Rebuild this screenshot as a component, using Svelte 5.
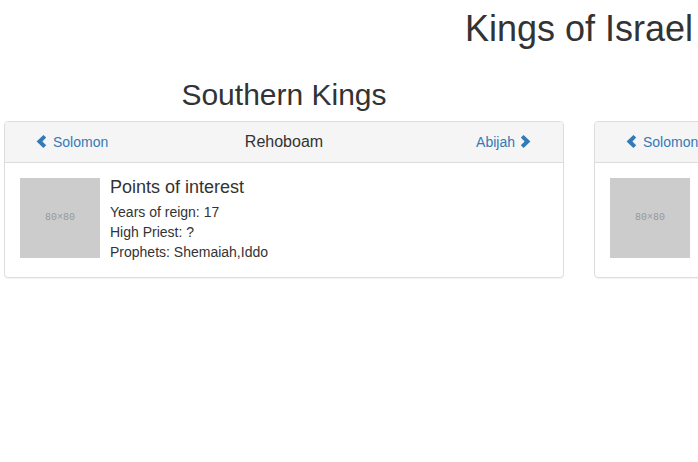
<script>
  const divisions = [
    {
      title: 'Southern Kings',
      previous: 'Solomon',
      king: 'Rehoboam',
      next: 'Abijah',
      reign: '17',
      priest: '?',
      prophets: ['Shemaiah', 'Iddo']
    },
    {
      title: 'Northern Kings',
      previous: 'Solomon',
      king: 'Jeroboam',
      next: 'Nadab',
      reign: '22',
      priest: '?',
      prophets: ['Ahijah']
    }
  ];
</script>

<div class="viewport">
  <main>
    <h1>Kings of Israel</h1>
    <div class="divisions">
      {#each divisions as division}
        <section>
          <h2>{division.title}</h2>
          <article class="panel">
            <header>
              <a href="#previous">
                <svg class="chevron" viewBox="0 0 14 14" aria-hidden="true">
                  <path d="M8.4 0 L11.2 2.6 L7.4 6.4 L11.2 10.2 L8.4 13 L1.6 6.4 Z" />
                </svg>
                <span>{division.previous}</span>
              </a>
              <h3>{division.king}</h3>
              <a class="next" href="#next">
                <span>{division.next}</span>
                <svg class="chevron" viewBox="0 0 14 14" aria-hidden="true">
                  <path d="M4.6 0 L1.8 2.6 L5.6 6.4 L1.8 10.2 L4.6 13 L11.4 6.4 Z" />
                </svg>
              </a>
            </header>
            <div class="body">
              <div class="thumbnail">80×80</div>
              <div class="details">
                <h4>Points of interest</h4>
                <p>Years of reign: {division.reign}</p>
                <p>High Priest: {division.priest}</p>
                <p>Prophets: {division.prophets.join(',')}</p>
              </div>
            </div>
          </article>
        </section>
      {/each}
    </div>
  </main>
</div>

<style>
  :global(body) {
    margin: 0;
    background: #fff;
  }

  .viewport {
    overflow: hidden;
    font: 14px/20px 'Liberation Sans', Arial, sans-serif;
    color: #333;
  }

  main {
    box-sizing: border-box;
    width: 100%;
    min-width: 1158px;
    padding: 9px 4px 20px;
  }

  h1,
  h2,
  h3,
  h4,
  p {
    margin: 0;
    font-weight: 400;
  }

  h1 {
    margin-bottom: 29px;
    font-size: 36px;
    line-height: 40px;
    text-align: center;
  }

  .divisions {
    display: grid;
    grid-template-columns: 1fr 1fr;
    gap: 30px;
  }

  h2 {
    margin-bottom: 10px;
    font-size: 30px;
    line-height: 33px;
    text-align: center;
  }

  .panel {
    border: 1px solid #ddd;
    border-radius: 4px;
    box-shadow: 0 1px 1px rgba(0, 0, 0, 0.05);
    overflow: hidden;
  }

  header {
    display: grid;
    grid-template-columns: 1fr 1fr 1fr;
    align-items: center;
    padding: 10px 30px;
    border-bottom: 1px solid #ddd;
    background: #f5f5f5;
  }

  h3 {
    font-size: 16px;
    line-height: 20px;
    text-align: center;
  }

  a {
    display: flex;
    align-items: center;
    gap: 4px;
    color: #337ab7;
    text-decoration: none;
  }

  .next {
    justify-content: flex-end;
  }

  .chevron {
    width: 14px;
    height: 14px;
    fill: currentColor;
  }

  .body {
    display: flex;
    gap: 10px;
    padding: 15px;
  }

  .thumbnail {
    display: flex;
    align-items: center;
    justify-content: center;
    width: 80px;
    height: 80px;
    background: #ccc;
    color: #999;
    font: 10px/10px 'Liberation Mono', monospace;
  }

  .details {
    min-height: 84px;
  }

  h4 {
    margin-bottom: 5px;
    font-size: 18px;
    line-height: 19px;
  }
</style>
